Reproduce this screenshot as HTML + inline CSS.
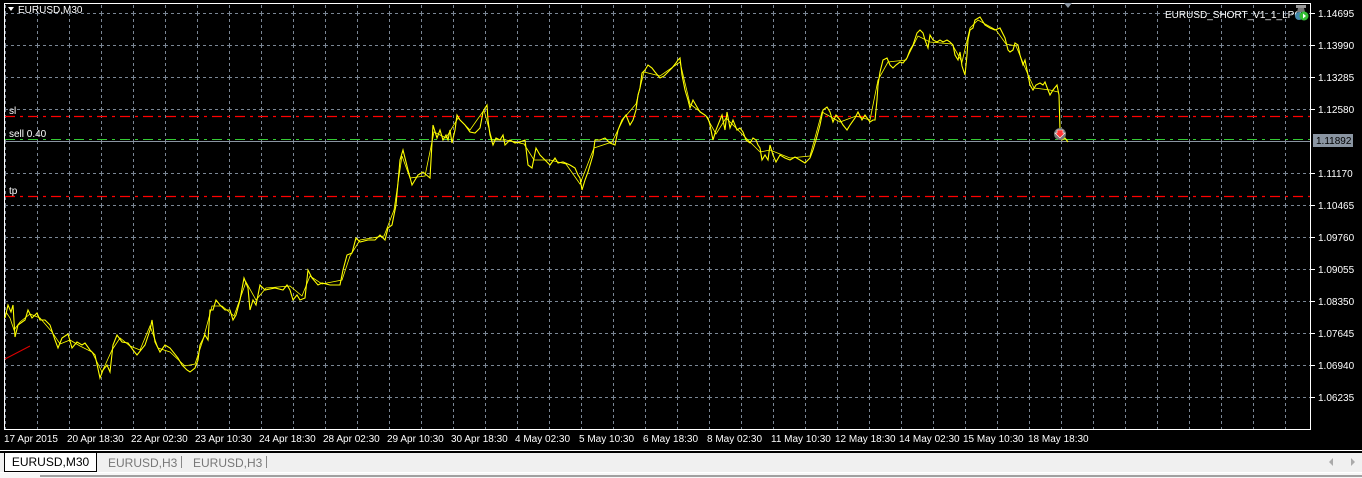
<!DOCTYPE html>
<html><head><meta charset="utf-8"><style>
html,body{margin:0;padding:0;width:1362px;height:477px;overflow:hidden;background:#000;font-family:"Liberation Sans",sans-serif}
svg{position:absolute;left:0;top:0}
.tabs{position:absolute;left:0;top:452px;width:1362px;height:20px;background:#f0f0f0;border-top:1px solid #000}
.bot{position:absolute;left:0;top:472px;width:1362px;height:5px;background:#f7f7f7;border-top:1px solid #fff}
.bot2{position:absolute;left:40px;top:475px;width:1322px;height:2px;background:#a0a0a0}
.tab{position:absolute;top:2px;font-size:12px;color:#777;line-height:16px}
</style></head><body>
<svg width="1362" height="452" xmlns="http://www.w3.org/2000/svg" font-family="Liberation Sans, sans-serif" font-size="10">
<defs>
<pattern id="g" x="37" y="13" width="32" height="32" patternUnits="userSpaceOnUse">
<line x1="0.5" y1="0" x2="0.5" y2="32" stroke="#7a8694" stroke-dasharray="3,3"/>
<line x1="0" y1="0.5" x2="32" y2="0.5" stroke="#7a8694" stroke-dasharray="3,3"/>
</pattern>
</defs>
<rect width="1362" height="452" fill="#000"/>
<rect x="4" y="3" width="1307" height="426" fill="url(#g)"/>
<rect x="4.5" y="3.5" width="1306" height="426" fill="none" stroke="#fff"/>
<line x1="0" y1="450.5" x2="1362" y2="450.5" stroke="#fff"/>
<line x1="5" y1="116.5" x2="1310" y2="116.5" stroke="#f00" stroke-width="1.2" stroke-dasharray="10,5,3,5"/>
<line x1="5" y1="196.5" x2="1310" y2="196.5" stroke="#f00" stroke-width="1.2" stroke-dasharray="10,5,3,5"/>
<line x1="5" y1="139.5" x2="1310" y2="139.5" stroke="#3c3" stroke-dasharray="10,5,3,5"/>
<line x1="5" y1="141.5" x2="1310" y2="141.5" stroke="#8a95a2"/>
<line x1="5" y1="359" x2="30" y2="346" stroke="#d00"/>
<g fill="none" stroke="#ff0" stroke-width="1.1">
<polyline points="5,318 8,305 11,312 13,305 15,337 18,325 25,320 28,310 32,318 37,313 40,320 45,320 50,325 55,340 58,348 62,338 68,334 72,348 77,342 82,345 85,343 90,350 95,355 100,378 103,370 107,365 110,372 113,345 117,335 122,342 128,343 133,350 137,355 145,345 150,330 152,320 155,342 160,352 165,345 170,348 178,358 182,365 187,370 190,372 195,368 198,360 200,345 205,335 208,340 210,310 213,310 216,300 220,305 225,310 230,310 233,320 236,315 240,300 244,278 248,288 250,310 253,300 256,305 260,285 265,290 275,288 283,290 287,285 290,290 293,300 297,295 300,300 305,298 308,270 312,278 318,285 322,283 330,285 336,285 340,285 343,270 347,255 352,253 356,238 360,242 368,240 375,240 380,235 385,240 388,228 392,225 396,205 400,160 403,150 408,170 412,185 418,175 423,172 430,178 433,125 437,138 440,130 443,140 446,135 448,140 450,130 452,143 455,130 457,115 460,120 465,125 470,132 475,133 480,128 483,112 485,108 487,105 488,120 490,135 493,145 496,138 500,140 503,135 505,145 510,140 515,143 520,142 525,140 528,165 532,168 536,148 540,155 545,160 550,165 555,158 558,163 563,162 570,165 575,168 578,175 580,178 582,190 585,180 588,172 593,155 595,140 600,140 605,138 610,143 615,145 618,130 622,120 626,115 630,125 633,120 636,110 638,95 640,88 642,73 645,70 648,65 652,68 655,72 660,78 664,76 668,72 672,68 676,63 678,60 680,58 682,75 685,90 688,100 690,108 693,100 697,107 700,112 705,115 708,118 710,125 713,140 716,130 720,120 722,115 725,130 727,112 730,128 733,120 737,130 740,128 743,132 746,140 750,143 753,138 756,140 758,145 760,148 762,160 765,155 768,160 770,145 773,155 776,162 780,155 785,158 790,160 795,157 800,160 805,163 810,158 813,150 816,140 820,125 823,110 827,107 830,112 833,122 836,115 840,120 843,125 847,130 850,125 855,118 858,112 862,120 865,115 870,122 873,120 875,120 877,100 878,85 880,72 883,60 887,58 890,65 893,68 896,65 900,62 903,63 907,58 910,50 913,45 917,33 920,30 923,33 925,40 928,48 930,35 933,40 937,42 940,40 943,42 947,40 950,42 953,45 955,55 958,60 960,52 962,66 965,75 967,55 968,40 970,30 973,28 975,20 980,17 985,25 990,28 995,30 1000,28 1005,38 1008,50 1010,52 1013,50 1015,43 1018,45 1020,55 1023,65 1025,60 1028,75 1030,85 1033,90 1036,85 1040,83 1043,85 1045,82 1048,90 1050,95 1053,90 1057,85 1059,95 1060,130 1062,140 1065,138 1068,142"/>
<polyline stroke-width="0.8" points="6,312 10,318 14,330 20,322 30,314 40,318 52,332 60,344 70,340 80,346 92,352 102,372 112,350 120,338 130,346 140,350 150,326 158,348 170,352 185,366 195,364 203,340 212,306 222,306 234,316 246,282 256,300 266,288 290,286 302,296 310,276 322,284 342,280 350,256 360,240 384,236 394,210 402,156 410,178 425,176 434,132 446,138 458,118 470,130 484,110 492,140 506,140 524,144 534,160 550,160 566,164 580,184 594,148 612,142 624,118 636,104 644,72 660,76 680,62 690,104 706,116 716,134 726,118 740,132 760,152 770,150 790,158 810,156 822,112 840,122 856,116 870,120 878,80 888,62 906,60 918,36 930,42 952,44 962,62 970,28 978,20 996,30 1006,44 1016,46 1026,70 1034,88 1050,90 1058,92"/>
</g>
<circle cx="1060" cy="134" r="6" fill="#777"/>
<path d="M1057,130 h6 v3 h2 l-5,5 l-5,-5 h2z" fill="#f33" stroke="#fff" stroke-width="0.6"/>
<path d="M1064,3 l8,0 l-4,5z" fill="#8a95a2"/>
<path d="M8,7 l6,0 l-3,4z" fill="#fff"/>
<text x="18" y="13" fill="#fff" font-size="10">EURUSD,M30</text>
<text x="9" y="114" fill="#fff">sl</text>
<text x="9" y="137" fill="#fff">sell 0.40</text>
<text x="9" y="194" fill="#fff">tp</text>
<text x="1165" y="18" fill="#fff" font-size="10">EURUSD_SHORT_V1_1_LPC</text>
<rect x="1296" y="5" width="10" height="3" fill="#999"/><path d="M1298,8 l6,0 l1,4 l-8,0z" fill="#777"/>
<circle cx="1299" cy="16" r="4" fill="#48a"/><circle cx="1304" cy="16" r="4.5" fill="#3b3"/><path d="M1303,13.5 l3,2.5 l-3,2.5z" fill="#fff"/>
<g fill="#fff" font-size="10">
<text x="1318" y="17">1.14695</text><text x="1318" y="49">1.13990</text><text x="1318" y="81">1.13285</text><text x="1318" y="113">1.12580</text>
<text x="1318" y="177">1.11170</text><text x="1318" y="209">1.10465</text><text x="1318" y="241">1.09760</text><text x="1318" y="273">1.09055</text>
<text x="1318" y="305">1.08350</text><text x="1318" y="337">1.07645</text><text x="1318" y="369">1.06940</text><text x="1318" y="401">1.06235</text>
</g>
<g stroke="#fff"><line x1="1311" y1="13.5" x2="1315" y2="13.5"/><line x1="1311" y1="45.5" x2="1315" y2="45.5"/><line x1="1311" y1="77.5" x2="1315" y2="77.5"/><line x1="1311" y1="109.5" x2="1315" y2="109.5"/><line x1="1311" y1="173.5" x2="1315" y2="173.5"/><line x1="1311" y1="205.5" x2="1315" y2="205.5"/><line x1="1311" y1="237.5" x2="1315" y2="237.5"/><line x1="1311" y1="269.5" x2="1315" y2="269.5"/><line x1="1311" y1="301.5" x2="1315" y2="301.5"/><line x1="1311" y1="333.5" x2="1315" y2="333.5"/><line x1="1311" y1="365.5" x2="1315" y2="365.5"/><line x1="1311" y1="397.5" x2="1315" y2="397.5"/></g>
<rect x="1313" y="134" width="40" height="13" fill="#8a95a2"/>
<text x="1316" y="144" fill="#000" font-size="10">1.11892</text>
<g fill="#fff" font-size="10">
<text x="4" y="442">17 Apr 2015</text><text x="67" y="442">20 Apr 18:30</text><text x="131" y="442">22 Apr 02:30</text><text x="195" y="442">23 Apr 10:30</text><text x="259" y="442">24 Apr 18:30</text><text x="323" y="442">28 Apr 02:30</text><text x="387" y="442">29 Apr 10:30</text><text x="451" y="442">30 Apr 18:30</text><text x="515" y="442">4 May 02:30</text><text x="579" y="442">5 May 10:30</text><text x="643" y="442">6 May 18:30</text><text x="707" y="442">8 May 02:30</text><text x="771" y="442">11 May 10:30</text><text x="835" y="442">12 May 18:30</text><text x="899" y="442">14 May 02:30</text><text x="963" y="442">15 May 10:30</text><text x="1028" y="442">18 May 18:30</text>
</g>
</svg>
<div class="tabs">
<div style="position:absolute;left:4px;top:0;width:91px;height:18px;background:#fff;border:1px solid #000;border-top:none;font-size:12px;line-height:18px;text-align:center;color:#000">EURUSD,M30</div>
<div class="tab" style="left:108px">EURUSD,H3</div>
<div style="position:absolute;left:181px;top:3px;width:1px;height:12px;background:#888"></div>
<div class="tab" style="left:193px">EURUSD,H3</div>
<div style="position:absolute;left:266px;top:3px;width:1px;height:12px;background:#888"></div>
<div style="position:absolute;left:1329px;top:5px;width:0;height:0;border:4px solid transparent;border-right-color:#aaa;border-left:0"></div>
<div style="position:absolute;left:1351px;top:5px;width:0;height:0;border:4px solid transparent;border-left-color:#aaa;border-right:0"></div>
</div>
<div class="bot"></div><div class="bot2"></div>
</body></html>
